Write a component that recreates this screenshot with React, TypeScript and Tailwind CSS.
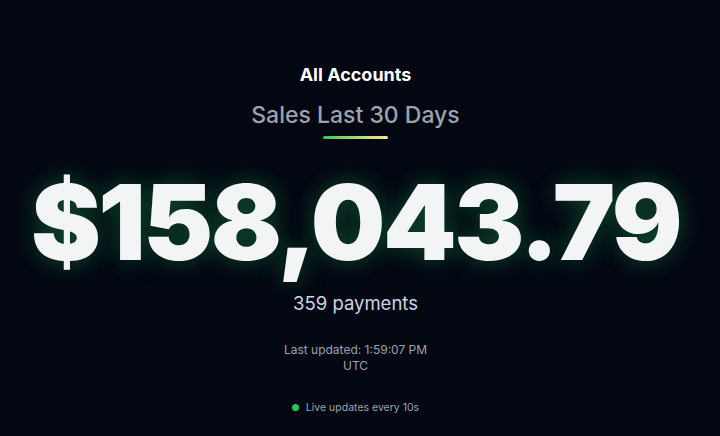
import { useEffect, useState } from 'react';

const App = () => {
  const [updatedAt] = useState('1:59:07 PM UTC');
  const [pulse, setPulse] = useState(true);

  // tick the live dot so it feels alive
  useEffect(() => {
    const id = setInterval(() => setPulse((p) => !p), 10000);
    return () => clearInterval(id);
  }, []);

  return (
    <div
      className="min-h-[436px] w-full bg-[#030712] pr-[9px] flex flex-col items-center text-center"
      style={{ fontFamily: 'Inter, "Noto Sans", sans-serif' }}
    >
      <h2 className="mt-[63px] text-[18px] leading-6 font-bold text-white">All Accounts</h2>
      <h1 className="mt-[14px] text-[23px] leading-7 font-medium text-[#9ca3af]">Sales Last 30 Days</h1>
      <div className="mt-[7px] h-[3px] w-[65px] rounded-full bg-gradient-to-r from-[#22c55e] to-[#fde68a]" />

      <div className="mt-[30px] text-[105px] leading-[105px] font-black tracking-[-2.5px] text-[#f3f4f6] [text-shadow:0_0_24px_rgba(34,197,94,0.35)]">
        $158,043.79
      </div>

      <p className="mt-[17px] text-[18.5px] leading-6 text-[#cbd5e1]">359 payments</p>

      <p className="mt-[27px] w-[165px] text-[12px] leading-4 text-[#9ca3af]">
        Last updated: {updatedAt}
      </p>

      <div className="mt-[26px] flex items-center gap-[7px] text-[10.5px] text-[#9ca3af]">
        <span className={`h-[7px] w-[7px] rounded-full ${pulse ? 'bg-[#22c55e]' : 'bg-[#16a34a]'}`} />
        Live updates every 10s
      </div>
    </div>
  );
};

export default App;
